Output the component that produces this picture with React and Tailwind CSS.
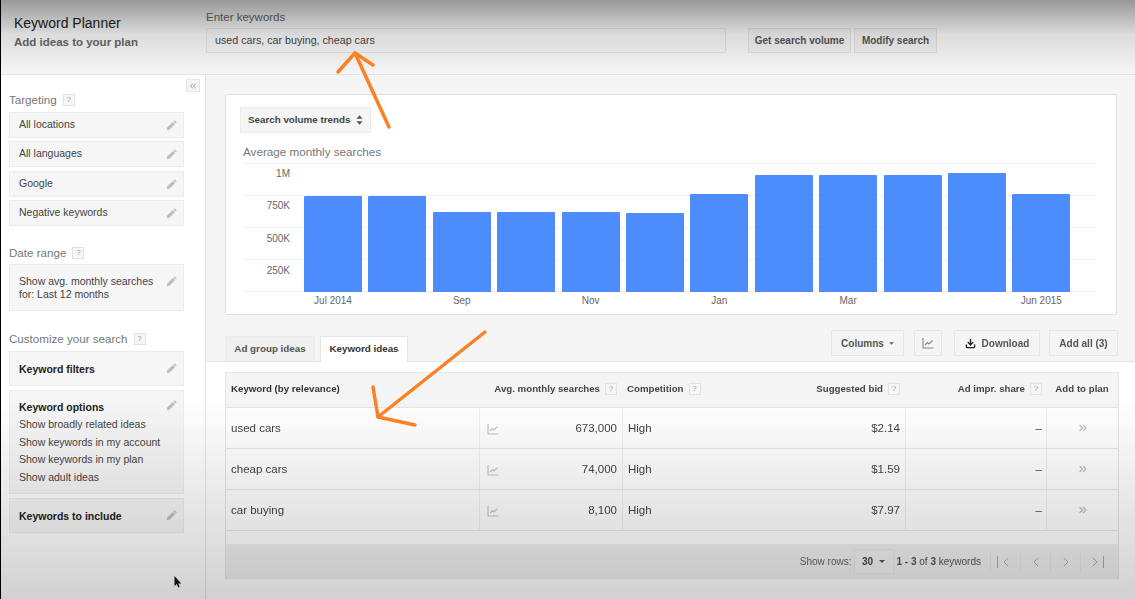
import React from 'react';
import { ChevronLeft, ChevronRight, ChevronsLeft, ChevronsRight, Download } from 'lucide-react';

const font = { fontFamily: '"Liberation Sans", Arial, sans-serif' };

const bars = [96, 96, 80, 80, 80, 79, 98, 117, 117, 117, 119, 98];
const xLabels = ['Jul 2014', '', 'Sep', '', 'Nov', '', 'Jan', '', 'Mar', '', '', 'Jun 2015'];

const rows = [
  { keyword: 'used cars', searches: '673,000', bid: '$2.14' },
  { keyword: 'cheap cars', searches: '74,000', bid: '$1.59' },
  { keyword: 'car buying', searches: '8,100', bid: '$7.97' },
];

const Help = () => (
  <span className="inline-flex h-[12px] w-[12px] shrink-0 items-center justify-center border border-[#e2e2e2] bg-[#f6f6f6] text-[8px] font-normal leading-none text-[#999]">?</span>
);

const Pencil = () => (
  <svg viewBox="0 0 12 12" className="h-[12px] w-[12px] shrink-0 fill-[#bdbdbd]">
    <path d="M8.6 1.2 10.8 3.4 9.7 4.5 7.5 2.3ZM6.9 2.9 9.1 5.1 3.4 10.8 0.8 11.2 1.2 8.6Z" />
  </svg>
);

const TrendIcon = ({ color = 'stroke-[#c4c4c4]' }) => (
  <svg viewBox="0 0 12 12" fill="none" className={`h-[12px] w-[12px] ${color}`} strokeWidth="1.1">
    <path d="M1 1v10h10.500" />
    <path d="M3 8l2.500-2.500 1.500 1.500 3.500-3.500" />
  </svg>
);

const SideBox = ({ className = '', children }) => (
  <div className={`flex w-[175px] justify-between border border-[#ececec] bg-[#f6f6f6] pl-[9px] pr-[5px] text-[10.500px] text-[#444] ${className}`}>
    {children}
  </div>
);

const SideItem = ({ label, height }) => (
  <SideBox className={`items-center ${height}`}>
    <span>{label}</span>
    <Pencil />
  </SideBox>
);

const SideTitle = ({ children }) => (
  <div className="flex items-center gap-[6px] text-[11.600px] leading-[14px] text-[#777]">
    {children}
    <Help />
  </div>
);

const Button = ({ className = '', children }) => (
  <div className={`flex h-[26px] items-center justify-center border border-[#e6e6e6] bg-[#f5f5f5] text-[10px] font-bold text-[#555] ${className}`}>
    {children}
  </div>
);

const Cell = ({ className = '', children }) => (
  <div className={`flex items-center ${className}`}>{children}</div>
);

const Sidebar = () => (
  <aside className="flex w-[205px] shrink-0 flex-col border-r border-[#e2e2e2] bg-white pl-[8px]">
    <div className="mt-[4px] flex justify-end pr-[5px]">
      <div className="flex h-[13px] w-[14px] items-center justify-center border border-[#e6e6e6] bg-[#f5f5f5]">
        <ChevronsLeft className="h-[10px] w-[10px] text-[#888]" strokeWidth={2} />
      </div>
    </div>
    <div className="mt-[1px] mb-[5px]"><SideTitle>Targeting</SideTitle></div>
    <div className="flex flex-col gap-[3.300px]">
      <SideItem label="All locations" height="h-[26px]" />
      <SideItem label="All languages" height="h-[26px]" />
      <SideItem label="Google" height="h-[26px]" />
      <SideItem label="Negative keywords" height="h-[26px]" />
    </div>
    <div className="mt-[20px] mb-[4px]"><SideTitle>Date range</SideTitle></div>
    <SideBox className="h-[47px] pt-[10px]">
      <span className="leading-[13px]">Show avg. monthly searches<br />for: Last 12 months</span>
      <Pencil />
    </SideBox>
    <div className="mt-[21px] mb-[5px]"><SideTitle>Customize your search</SideTitle></div>
    <div className="flex flex-col gap-[4px]">
      <SideBox className="h-[35px] pt-[10px]">
        <span className="font-bold text-[#222]">Keyword filters</span>
        <Pencil />
      </SideBox>
      <SideBox className="h-[104px] pt-[8px]">
        <div className="flex flex-col whitespace-nowrap leading-[17.400px]">
          <span className="font-bold text-[#222]">Keyword options</span>
          <span>Show broadly related ideas</span>
          <span>Show keywords in my account</span>
          <span>Show keywords in my plan</span>
          <span>Show adult ideas</span>
        </div>
        <Pencil />
      </SideBox>
      <SideBox className="h-[35px] pt-[10px]">
        <span className="font-bold text-[#222]">Keywords to include</span>
        <Pencil />
      </SideBox>
    </div>
  </aside>
);

const Chart = () => (
  <div className="ml-[3px] w-[853px]">
    <div className="grid h-[129px]">
      <div className="col-start-1 row-start-1 flex flex-col">
        <div className="h-[32px] border-t border-[#f0f0f0]" />
        <div className="h-[32px] border-t border-[#f0f0f0]" />
        <div className="h-[32px] border-t border-[#f0f0f0]" />
        <div className="h-[33px] border-y border-[#f0f0f0]" />
      </div>
      <div className="col-start-1 row-start-1 flex">
        <div className="-mt-[5px] flex w-[47px] flex-col items-end text-[10px] leading-[32.300px] text-[#666]">
          <span>1M</span>
          <span>750K</span>
          <span>500K</span>
          <span>250K</span>
        </div>
        <div className="ml-[14px] flex items-end gap-[6.400px]">
          {bars.map((h, i) => (
            <div key={i} className="w-[58px] rounded-t-[1px] bg-[#4d8cfd]" style={{ height: h }} />
          ))}
        </div>
      </div>
    </div>
    <div className="ml-[61px] mt-[3px] flex gap-[6.400px] text-[10px] leading-[12px] text-[#666]">
      {xLabels.map((l, i) => (
        <div key={i} className="w-[58px] whitespace-nowrap text-center">{l}</div>
      ))}
    </div>
  </div>
);

const KeywordTable = () => (
  <div className="ml-[19px] w-[894px] border-x border-[#e4e4e4] text-[#444]">
    <div className="grid h-[36px] grid-cols-[253px_143px_138px_145px_141px_72px] border-y border-[#e6e6e6] bg-[#f4f4f4] pb-[2px] text-[9.700px] font-bold">
      <Cell className="pl-[5px] text-[#333]">Keyword (by relevance)</Cell>
      <Cell className="justify-end gap-[5px] pr-[5px]">Avg. monthly searches <Help /></Cell>
      <Cell className="gap-[5px] pl-[5px]">Competition <Help /></Cell>
      <Cell className="justify-end gap-[5px] pr-[5px]">Suggested bid <Help /></Cell>
      <Cell className="justify-end gap-[5px] pr-[4px]">Ad impr. share <Help /></Cell>
      <Cell className="justify-center">Add to plan</Cell>
    </div>
    {rows.map((r) => (
      <div key={r.keyword} className="grid h-[41px] grid-cols-[253px_143px_138px_145px_141px_72px] border-b border-[#e8e8e8] bg-white text-[11.500px]">
        <Cell className="pl-[5px] pt-[2px]">{r.keyword}</Cell>
        <Cell className="justify-between border-l border-[#f0f0f0] pl-[7px] pr-[5px] pt-[2px]">
          <TrendIcon />
          <span>{r.searches}</span>
        </Cell>
        <Cell className="border-l border-[#f0f0f0] pl-[5px] pt-[2px]">High</Cell>
        <Cell className="justify-end pr-[5px] pt-[2px]">{r.bid}</Cell>
        <Cell className="justify-end border-l border-[#f0f0f0] pr-[4px] pt-[2px]">–</Cell>
        <Cell className="justify-center border-l border-[#f0f0f0]">
          <ChevronsRight className="h-[12px] w-[12px] text-[#bbb]" strokeWidth={2.500} />
        </Cell>
      </div>
    ))}
    <div className="h-[13px] bg-white" />
    <div className="flex h-[35px] items-center justify-end bg-[#f0f0f0] pr-[8px] text-[10px] text-[#666]">
      <span>Show rows:</span>
      <div className="ml-[2px] flex h-[25px] w-[40px] items-center justify-center gap-[6px] border border-[#e6e6e6] bg-[#f3f3f3] font-bold text-[#444]">
        30
        <svg viewBox="0 0 8 4" className="h-[3px] w-[6px] fill-[#555]"><path d="M0 0h8L4 4Z" /></svg>
      </div>
      <span className="ml-[3px] text-[#555]"><b>1 - 3</b> of <b>3</b> keywords</span>
      <div className="ml-[9px] flex items-center text-[#aaa]">
        <div className="flex h-[20px] w-[30px] items-center justify-center border-l border-[#e6e6e6]">
          <span className="h-[12px] w-[1px] bg-[#aaa]" />
          <ChevronLeft className="h-[16px] w-[16px]" strokeWidth={1.500} />
        </div>
        <div className="flex h-[20px] w-[30px] items-center justify-center border-l border-[#e6e6e6]">
          <ChevronLeft className="h-[16px] w-[16px]" strokeWidth={1.500} />
        </div>
        <div className="flex h-[20px] w-[30px] items-center justify-center border-l border-[#e6e6e6]">
          <ChevronRight className="h-[16px] w-[16px]" strokeWidth={1.500} />
        </div>
        <div className="flex h-[20px] w-[30px] items-center justify-center border-l border-[#e6e6e6]">
          <ChevronRight className="h-[16px] w-[16px]" strokeWidth={1.500} />
          <span className="h-[12px] w-[1px] bg-[#aaa]" />
        </div>
      </div>
    </div>
  </div>
);

const App = () => {
  return (
    <div className="relative h-[599px] w-[1135px] overflow-hidden border-l border-black bg-white" style={font}>
      <div className="flex h-full flex-col blur-[0.4px]">
        {/* Header */}
        <header className="flex h-[75px] shrink-0 border-b border-[#e4e4e4] bg-[#f6f6f6]">
          <div className="w-[205px] pl-[13px] pt-[15px]">
            <div className="text-[14px] leading-[16px] text-[#222]">Keyword Planner</div>
            <div className="mt-[4px] text-[11.500px] font-bold leading-[14px] text-[#666]">Add ideas to your plan</div>
          </div>
          <div className="pt-[10px]">
            <div className="text-[11.500px] leading-[14px] text-[#666]">Enter keywords</div>
            <div className="mt-[4px] flex h-[25px] w-[520px] items-center border border-[#e2e2e2] bg-[#f4f4f4] pl-[8px] text-[10.700px] text-[#444]">
              used cars, car buying, cheap cars
            </div>
          </div>
          <div className="ml-[22px] mt-[28px] flex gap-[3px]">
            <Button className="!h-[25px] w-[103px] !border-[#e0e0e0] !bg-[#efefef]">Get search volume</Button>
            <Button className="!h-[25px] w-[83px] !border-[#e0e0e0] !bg-[#efefef]">Modify search</Button>
          </div>
        </header>

        <div className="flex flex-1">
          <Sidebar />
          <main className="flex-1">
            <div className="bg-[#f5f5f5] pt-[19px]">
              {/* Chart card */}
              <section className="ml-[19px] h-[221px] w-[892px] rounded-[2px] border border-[#dfdfdf] bg-white pl-[14px] pt-[12px]">
                <div className="flex h-[26px] w-[131px] items-center gap-[6px] border border-[#ececec] bg-[#f5f5f5] pl-[7px] text-[9.800px] font-bold text-[#444]">
                  Search volume trends
                  <svg viewBox="0 0 8 11" className="h-[10px] w-[7px] fill-[#555]"><path d="M4 0l3.500 4h-7zM4 11 .5 7h7z" /></svg>
                </div>
                <div className="ml-[3px] mt-[11px] text-[11.700px] leading-[15px] text-[#777]">Average monthly searches</div>
                <div className="mt-[4px]"><Chart /></div>
              </section>

              {/* Tabs and tools */}
              <div className="mt-[15px] flex h-[32px] items-end justify-between border-b border-[#e2e2e2] pl-[19px] pr-[17px]">
                <div className="flex gap-[5px]">
                  <div className="flex h-[25px] w-[90px] items-center justify-center border border-b-0 border-[#ececec] bg-[#f0f0f0] text-[9.800px] font-bold text-[#555]">Ad group ideas</div>
                  <div className="-mb-[1px] flex h-[26px] w-[88px] items-center justify-center border border-b-0 border-[#e4e4e4] bg-white text-[9.800px] font-bold text-[#333]">Keyword ideas</div>
                </div>
                <div className="mb-[5px] flex">
                  <Button className="w-[73px] gap-[5px]">
                    Columns
                    <svg viewBox="0 0 8 4" className="h-[3px] w-[5px] fill-[#666]"><path d="M0 0h8L4 4Z" /></svg>
                  </Button>
                  <Button className="ml-[10px] w-[28px]"><TrendIcon color="stroke-[#888]" /></Button>
                  <Button className="ml-[12px] w-[86px] gap-[6px]">
                    <Download className="h-[11px] w-[11px] text-[#222]" strokeWidth={3} />
                    Download
                  </Button>
                  <Button className="ml-[9px] w-[69px]">Add all (3)</Button>
                </div>
              </div>
            </div>
            <div className="pt-[10px]">
              <KeywordTable />
            </div>
          </main>
        </div>
      </div>

      {/* Video vignette */}
      <div className="pointer-events-none absolute inset-0 bg-[linear-gradient(to_bottom,rgba(0,0,0,0.38)_0px,rgba(0,0,0,0.10)_35px,rgba(0,0,0,0)_75px,rgba(0,0,0,0)_400px,rgba(0,0,0,0.18)_599px)]" />

      {/* Annotation arrows */}
      <svg className="pointer-events-none absolute left-[-1px] top-0 h-[599px] w-[1135px]" viewBox="0 0 1135 599" fill="none">
        <g stroke="#fb8124" strokeWidth="3.500" strokeLinecap="round" strokeLinejoin="round">
          <path d="M389 127 355 53" />
          <path d="M338 72 355 53 373 65" />
          <path d="M485 332 378 417" />
          <path d="M373 387 378 417 415 425" />
        </g>
        <path d="M174.500 576v10l2.300-2 1.500 3.400 1.400-.6-1.500-3.300h3z" fill="#111" />
      </svg>
    </div>
  );
};

export default App;
